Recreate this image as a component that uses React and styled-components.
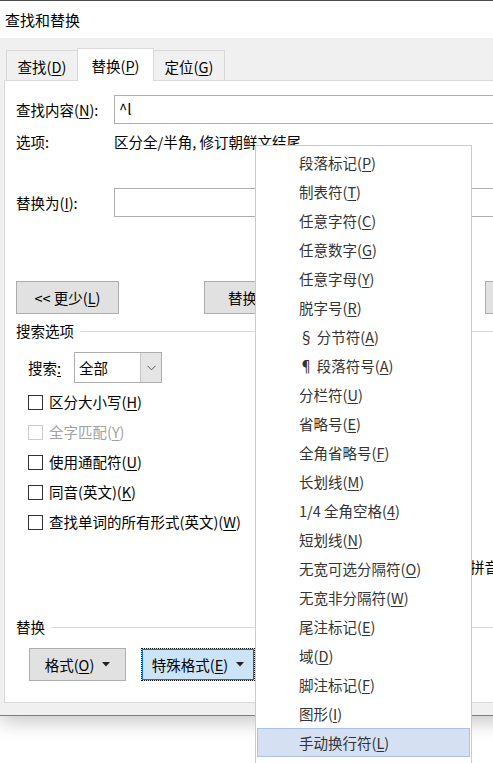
import styled, { createGlobalStyle, css } from "styled-components";

const GlobalStyle = createGlobalStyle`
  html, body {
    margin: 0;
    padding: 0;
    background: #ffffff;
    overflow: hidden;
  }
  body {
    font-family: "Noto Sans CJK SC", "Microsoft YaHei", sans-serif;
    font-size: 14.5px;
    color: #000;
  }
`;

const specialItems = [
  ["段落标记", "P"],
  ["制表符", "T"],
  ["任意字符", "C"],
  ["任意数字", "G"],
  ["任意字母", "Y"],
  ["脱字号", "R"],
  ["§ 分节符", "A"],
  ["¶ 段落符号", "A"],
  ["分栏符", "U"],
  ["省略号", "E"],
  ["全角省略号", "F"],
  ["长划线", "M"],
  ["1/4 全角空格", "4"],
  ["短划线", "N"],
  ["无宽可选分隔符", "O"],
  ["无宽非分隔符", "W"],
  ["尾注标记", "E"],
  ["域", "D"],
  ["脚注标记", "F"],
  ["图形", "I"],
  ["手动换行符", "L"],
];

const checks = [
  ["区分大小写", "H", false],
  ["全字匹配", "Y", true],
  ["使用通配符", "U", false],
  ["同音(英文)", "K", false],
  ["查找单词的所有形式(英文)", "W", false],
];

const Caret = () => (
  <svg width="8" height="5" viewBox="0 0 8 5">
    <path d="M0 0 H8 L4 4.5 Z" fill="#222" />
  </svg>
);

const Chevron = () => (
  <svg width="9" height="6" viewBox="0 0 9 6">
    <path d="M0.5 0.8 L4.5 4.8 L8.5 0.8" fill="none" stroke="#555" strokeWidth="1" />
  </svg>
);

export default function App() {
  return (
    <Page>
      <GlobalStyle />
      <Dialog>
        <TitleBar>查找和替换</TitleBar>
        <Body>
          <Tabs>
            <Tab $w={72}>
              查找(<Key>D</Key>)
            </Tab>
            <Tab $w={77} $active>
              替换(<Key>P</Key>)
            </Tab>
            <Tab $w={72}>
              定位(<Key>G</Key>)
            </Tab>
          </Tabs>

          <Panel>
            <FieldRow>
              <Label>
                查找内容(<Key>N</Key>):
              </Label>
              <TextBox>^l</TextBox>
            </FieldRow>

            <InfoRow>
              <Label>选项:</Label>
              <span>区分全/半角, 修订朝鲜文结尾</span>
            </InfoRow>

            <FieldRow $mt={36}>
              <Label>
                替换为(<Key>I</Key>):
              </Label>
              <TextBox />
            </FieldRow>

            <ActionRow>
              <Button $w={103}>
                &lt;&lt; 更少(<Key>L</Key>)
              </Button>
              <Spacer $w={85} />
              <Button $w={96}>
                替换(<Key>R</Key>)
              </Button>
              <Spacer $w={44} />
              <Button $w={103}>
                全部替换(<Key>A</Key>)
              </Button>
              <Spacer $w={38} />
              <Button $w={126}>
                查找下一处(<Key>F</Key>)
              </Button>
            </ActionRow>

            <GroupHeader $mt={7}>
              <span>搜索选项</span>
            </GroupHeader>

            <SearchRow>
              <SearchLabel>
                搜索<Key>:</Key>
              </SearchLabel>
              <Select>
                <SelectValue>全部</SelectValue>
                <SelectButton>
                  <Chevron />
                </SelectButton>
              </Select>
            </SearchRow>

            <CheckList>
              {checks.map(([text, key, disabled]) => (
                <CheckRow key={text} $disabled={disabled}>
                  <Box $disabled={disabled} />
                  <span>
                    {text}(<Key $off={disabled}>{key}</Key>)
                  </span>
                </CheckRow>
              ))}
            </CheckList>

            <SideOption>忽略拼音</SideOption>

            <GroupHeader $mt={40}>
              <span>替换</span>
            </GroupHeader>

            <ReplaceRow>
              <DropButton $w={97}>
                <span>
                  格式(<Key>O</Key>)
                </span>
                <Caret />
              </DropButton>
              <DropButton $w={114} $focused>
                <span>
                  特殊格式(<Key>E</Key>)
                </span>
                <Caret />
              </DropButton>
            </ReplaceRow>
          </Panel>
        </Body>
      </Dialog>

      <Menu>
        {specialItems.map(([text, key], i) => (
          <MenuItem key={i} $hot={i === specialItems.length - 1}>
            {text}(<Key>{key}</Key>)
          </MenuItem>
        ))}
      </Menu>
    </Page>
  );
}

const Page = styled.div`
  position: relative;
  width: 493px;
  height: 763px;
  overflow: hidden;
  background: #fff;
`;

const Dialog = styled.div`
  width: 540px;
  border-top: 1px solid #4d4d4d;
  border-bottom: 1px solid #7d7d7d;
  box-shadow: 0 6px 18px rgba(0, 0, 0, 0.22);
`;

const TitleBar = styled.div`
  height: 37px;
  background: #fff;
  padding-left: 5px;
  font-size: 15px;
  line-height: 37px;
`;

const Body = styled.div`
  background: #f0f0f0;
  padding: 10px 0 12px 4px;
`;

const Tabs = styled.div`
  display: flex;
  align-items: flex-end;
  height: 32px;
  padding-left: 2px;
`;

const Tab = styled.div`
  box-sizing: border-box;
  width: ${(p) => p.$w}px;
  height: 30px;
  border: 1px solid #d9d9d9;
  border-bottom: none;
  background: #f0f0f0;
  display: flex;
  align-items: center;
  justify-content: center;
  padding-top: 3px;
  line-height: 20px;
  margin-right: -1px;
  ${(p) =>
    p.$active &&
    css`
      position: relative;
      z-index: 1;
      height: 33px;
      margin-bottom: -1px;
      background: #fff;
      padding-top: 1px;
    `}
`;

const Panel = styled.div`
  background: #fff;
  border: 1px solid #d9d9d9;
  padding: 14px 0 21px 11px;
`;

const Key = styled.u`
  text-decoration: underline;
  text-underline-offset: 2px;
  ${(p) => p.$off && css`color: #a0a0a0;`}
`;

const FieldRow = styled.div`
  display: flex;
  align-items: center;
  height: 29px;
  margin-top: ${(p) => p.$mt || 0}px;
`;

const Label = styled.div`
  width: 98px;
  line-height: 20px;
`;

const TextBox = styled.div`
  box-sizing: border-box;
  flex: 1;
  height: 29px;
  border: 1px solid #adadad;
  background: #fff;
  padding-left: 4px;
  font-size: 15px;
  line-height: 25px;
`;

const InfoRow = styled.div`
  display: flex;
  align-items: center;
  height: 20px;
  margin-top: 8px;
  line-height: 20px;
  white-space: nowrap;
`;

const ActionRow = styled.div`
  display: flex;
  margin-top: 64px;
  white-space: nowrap;
`;

const Spacer = styled.div`
  flex: none;
  width: ${(p) => p.$w}px;
`;

const Button = styled.div`
  box-sizing: border-box;
  flex: none;
  width: ${(p) => p.$w}px;
  height: 33px;
  border: 1px solid #adadad;
  background: #e1e1e1;
  display: flex;
  align-items: center;
  justify-content: center;
  line-height: 20px;
`;

const GroupHeader = styled.div`
  display: flex;
  align-items: center;
  gap: 6px;
  height: 20px;
  margin-top: ${(p) => p.$mt}px;
  line-height: 20px;
  &::after {
    content: "";
    flex: 1;
    height: 1px;
    background: #dcdcdc;
  }
`;

const SearchRow = styled.div`
  display: flex;
  align-items: center;
  margin-top: 11px;
  padding-left: 12px;
`;

const SearchLabel = styled.div`
  width: 46px;
  line-height: 20px;
`;

const Select = styled.div`
  box-sizing: border-box;
  display: flex;
  width: 88px;
  height: 31px;
  border: 1px solid #adadad;
  background: #fff;
`;

const SelectValue = styled.div`
  flex: 1;
  padding-left: 4px;
  line-height: 29px;
`;

const SelectButton = styled.div`
  width: 20px;
  background: #e5e5e5;
  border-left: 1px solid #c8c8c8;
  display: flex;
  align-items: center;
  justify-content: center;
`;

const CheckList = styled.div`
  margin-top: 4px;
  padding-left: 12px;
`;

const CheckRow = styled.div`
  display: flex;
  align-items: center;
  gap: 6px;
  height: 30px;
  line-height: 20px;
  white-space: nowrap;
  color: ${(p) => (p.$disabled ? "#a0a0a0" : "#000")};
`;

const Box = styled.div`
  box-sizing: border-box;
  width: 15px;
  height: 15px;
  border: 1px solid ${(p) => (p.$disabled ? "#cccccc" : "#333333")};
  background: #fff;
`;

const SideOption = styled.div`
  height: 20px;
  margin-top: 20px;
  padding-left: 425px;
  line-height: 20px;
  white-space: nowrap;
`;

const ReplaceRow = styled.div`
  display: flex;
  gap: 15px;
  margin-top: 11px;
  padding-left: 13px;
`;

const DropButton = styled.div`
  box-sizing: border-box;
  width: ${(p) => p.$w}px;
  height: 33px;
  border: 1px solid #adadad;
  background: #e1e1e1;
  display: flex;
  align-items: center;
  justify-content: center;
  gap: 8px;
  line-height: 20px;
  white-space: nowrap;
  ${(p) =>
    p.$focused &&
    css`
      border: 1px dotted #111;
      background: #cce4f7;
      box-shadow: inset 0 0 0 1px #0078d7;
    `}
`;

const Menu = styled.div`
  position: absolute;
  left: 255px;
  top: 145px;
  width: 217px;
  box-sizing: border-box;
  padding: 2px 1px 12px;
  background: #fff;
  border: 1px solid #cccccc;
  z-index: 5;
`;

const MenuItem = styled.div`
  box-sizing: border-box;
  height: 29px;
  padding-left: 41px;
  display: flex;
  align-items: center;
  color: #333;
  line-height: 20px;
  white-space: nowrap;
  border: 1px solid transparent;
  ${(p) =>
    p.$hot &&
    css`
      background: #d5e1f2;
      border-color: #a9c2e6;
    `}
`;
